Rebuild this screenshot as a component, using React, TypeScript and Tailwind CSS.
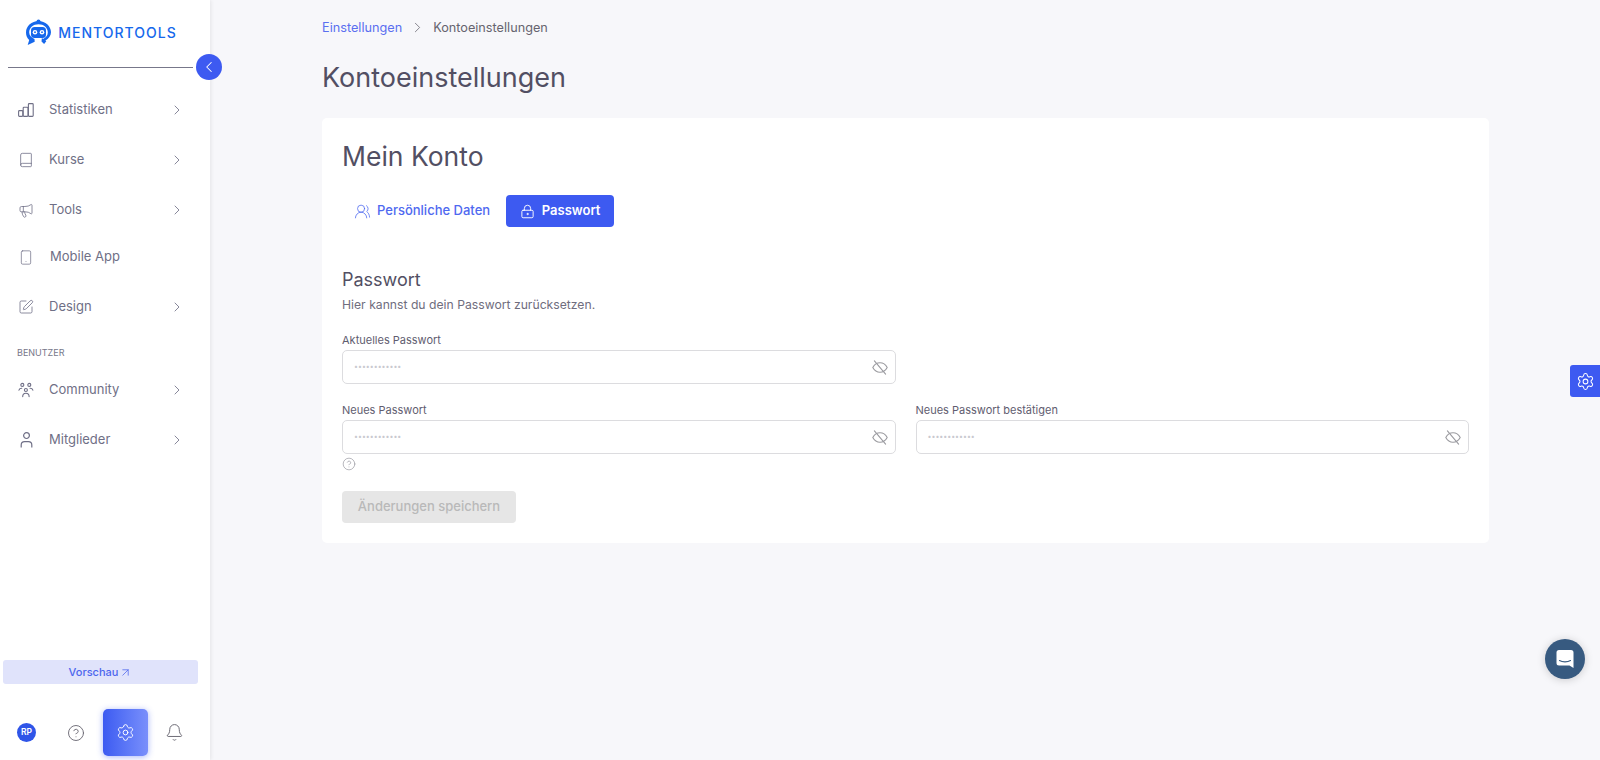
import React from "react";
import { Book, ChevronLeft, ChevronRight, CircleHelp, Bell, Settings, Megaphone, Smartphone, SquarePen, UsersRound, LockKeyhole, ArrowUpRight } from "lucide-react";

const Bars = () => (
  <svg width="16" height="14" viewBox="0 0 16 14" fill="none" stroke="currentColor" strokeWidth="1.1">
    <rect x="0.6" y="7.6" width="4.2" height="5.8" rx="0.8" />
    <rect x="5.2" y="4.2" width="4.8" height="9.2" rx="0.8" />
    <rect x="10.4" y="0.6" width="4.8" height="12.8" rx="0.8" />
  </svg>
);
const Community = () => (
  <svg width="17" height="16" viewBox="0 0 17 16" fill="none" stroke="currentColor" strokeWidth="1.2" strokeLinecap="round">
    <circle cx="4.6" cy="2.6" r="1.6" />
    <circle cx="12" cy="2.6" r="1.6" />
    <circle cx="8.4" cy="8" r="1.6" />
    <path d="M1 8.2c.4-1.4 1.6-2 3-2" />
    <path d="M15.8 8.2c-.4-1.4-1.6-2-3-2" />
    <path d="M5 15c0-2.4 1.4-3.6 3.4-3.6s3.4 1.2 3.4 3.6" />
  </svg>
);
const Person = () => (
  <svg width="13" height="16" viewBox="0 0 13 16" fill="none" stroke="currentColor" strokeWidth="1.2">
    <circle cx="6.5" cy="3.6" r="2.9" />
    <path d="M1.2 15.5v-2.4c0-2 1.6-3.4 3.4-3.4h3.8c1.8 0 3.4 1.4 3.4 3.4v2.4" />
  </svg>
);
const EyeSlash = () => (
  <svg width="16" height="15" viewBox="0 0 16 15" fill="none" stroke="#9a9a9f" strokeWidth="1.1" strokeLinecap="round">
    <path d="M0.8 7.5C2.600 4.200 5 2.800 8 2.800s5.400 1.400 7.200 4.700C13.400 10.800 11 12.200 8 12.200S2.600 10.800.8 7.500Z" />
    <path d="M2.400 0.800l11.200 13.400" />
  </svg>
);
const Logo = () => (
  <svg width="27" height="27" viewBox="0 0 27 27">
    <path fill="#1668ec" d="M13.500 2C6.700 2 1 7 1 13.400c0 3 1.200 5.600 3.200 7.500L2.700 26l7-3.300-.2-2.700C6.300 18.600 4.200 16.200 4.200 13.400 4.200 8.600 8.300 5.200 13.500 5.200s9.300 3.400 9.300 8.200c0 2.800-1.800 5.100-4.800 6.500l-1.100-1.100-.4 3.800 2.600 2.400 2.200-2.700-.9-.8c3.200-1.900 5.600-4.600 5.600-8.200C26 7 20.300 2 13.500 2Z" />
    <circle cx="13.500" cy="2.400" r="2" fill="#1668ec" />
    <rect x="6" y="8" width="15" height="11" rx="3.500" fill="#1668ec" />
    <circle cx="10" cy="13.200" r="2.300" fill="#fff" />
    <circle cx="17" cy="13.200" r="2.300" fill="#fff" />
    <circle cx="10" cy="13.200" r="0.900" fill="#1668ec" />
    <circle cx="17" cy="13.200" r="0.900" fill="#1668ec" />
  </svg>
);

function NavItem({ icon, label, arrow = true, gap = "w-[31px]" }: { icon: React.ReactNode; label: string; arrow?: boolean; gap?: string }) {
  return (
    <div className="flex h-[24px] items-center pl-[18px] pr-[25px] text-[13px] text-[#6f6f86]">
      <div className={`${gap} flex shrink-0 items-center`}>
        <div className="flex w-[16px] justify-center">{icon}</div>
      </div>
      <span className="flex-1">{label}</span>
      {arrow && <ChevronRight size={16} strokeWidth={1.250} />}
    </div>
  );
}

function Field({ label, className = "" }: { label: string; className?: string }) {
  return (
    <div className={className}>
      <div className="mb-[2px] text-[11px] leading-[15px] text-[#5f5d70]">{label}</div>
      <div className="flex h-[34px] items-center justify-between rounded-[5px] border border-[#dcdcdf] bg-white pl-[11px] pr-[7px]">
        <span className="text-[7px] text-[#c9c9cf]">••••••••••••</span>
        <EyeSlash />
      </div>
    </div>
  );
}

export default function App() {
  return (
    <div className="relative flex h-[760px] w-[1600px] overflow-hidden bg-[#f7f7fa] font-['Inter','Noto_Sans',sans-serif]">
      <aside className="relative flex h-full w-[210px] shrink-0 flex-col bg-white shadow-[1px_0_4px_rgba(0,0,0,0.08)]">
        <div className="ml-[8px] mr-[17px] flex h-[68px] items-start justify-center gap-[6px] border-b border-[#77778a] pl-[1px] pt-[19px]">
          <Logo />
          <span className="mt-[5px] text-[14px] font-medium leading-[17px] tracking-[1px] text-[#1668ec]">MENTORTOOLS</span>
        </div>
        <nav className="mt-[30px] flex flex-col">
          <NavItem icon={<Bars />} label="Statistiken" />
          <div className="h-[26px]" />
          <NavItem icon={<Book size={18} strokeWidth={1.200} />} label="Kurse" />
          <div className="h-[26px]" />
          <NavItem icon={<Megaphone size={19} strokeWidth={1.200} />} label="Tools" />
          <div className="h-[23px]" />
          <NavItem icon={<Smartphone size={21} strokeWidth={1.100} />} label="Mobile App" arrow={false} gap="w-[32px]" />
          <div className="h-[26px]" />
          <NavItem icon={<SquarePen size={18} strokeWidth={1.200} />} label="Design" />
          <div className="mb-[19px] mt-[28px] pl-[17px] text-[9px] leading-[12px] text-[#77778a]">BENUTZER</div>
          <NavItem icon={<Community />} label="Community" />
          <div className="h-[26px]" />
          <NavItem icon={<Person />} label="Mitglieder" />
        </nav>
        <div className="mt-auto px-[3px]">
          <div className="flex h-[24px] w-[195px] items-center justify-center gap-[1px] rounded-[3px] bg-[#e0e3fb] text-[11px] font-medium text-[#4d66ee]">
            Vorschau <ArrowUpRight size={13} strokeWidth={1.400} />
          </div>
        </div>
        <div className="mb-[4px] mt-[25px] flex h-[47px] items-center">
          <div className="ml-[17px] flex h-[19px] w-[19px] items-center justify-center rounded-full bg-[#2f55e8] text-[8.500px] font-semibold text-white">RP</div>
          <CircleHelp className="ml-[31px] text-[#66646f]" size={18} strokeWidth={1.200} />
          <div className="ml-[18px] flex h-[47px] w-[45px] items-center justify-center rounded-[5px] bg-gradient-to-r from-[#3d5af1] to-[#7a8ffb] text-white shadow-[0_1px_6px_rgba(61,90,241,0.45)]">
            <Settings size={19} strokeWidth={1.200} />
          </div>
          <Bell className="ml-[17px] text-[#66646f]" size={19} strokeWidth={1.200} />
        </div>
      </aside>

      <button className="absolute left-[196px] top-[54px] flex h-[26px] w-[26px] items-center justify-center rounded-full bg-[#3d5af1] text-white">
        <ChevronLeft size={18} strokeWidth={1.400} />
      </button>

      <main className="flex-1 pl-[112px] pr-[111px]">
        <div className="mt-[19px] flex h-[17px] items-center text-[12.700px] leading-[17px] text-[#66646f]">
          <span className="text-[#5b6ff0]">Einstellungen</span>
          <ChevronRight className="mx-[7px]" size={17} strokeWidth={1.100} />
          <span>Kontoeinstellungen</span>
        </div>
        <h1 className="mt-[24px] text-[27px] font-normal leading-[36px] text-[#524f63]">Kontoeinstellungen</h1>
        <section className="mt-[22px] h-[425px] rounded-[5px] bg-white px-[20px] pt-[20px]">
          <h2 className="text-[26.500px] leading-[36px] text-[#524f63]">Mein Konto</h2>
          <div className="mt-[21px] flex h-[32px] items-center gap-[16px]">
            <div className="flex h-[32px] items-center gap-[6px] pl-[12px] text-[13px] font-medium text-[#4f69f0]">
              <UsersRound size={17} strokeWidth={1.100} />
              Persönliche Daten
            </div>
            <div className="flex h-[32px] w-[108px] items-center justify-center gap-[7px] rounded-[4px] bg-[#3d5af1] text-[13px] font-semibold text-white">
              <LockKeyhole size={15} strokeWidth={1.500} />
              Passwort
            </div>
          </div>
          <h3 className="mt-[41px] text-[18px] leading-[24px] text-[#524f63]">Passwort</h3>
          <p className="mt-[4px] text-[12.200px] leading-[18px] text-[#6f6d7e]">Hier kannst du dein Passwort zurücksetzen.</p>
          <div className="mt-[19px] grid grid-cols-2 gap-x-[20px] gap-y-[19px]">
            <Field label="Aktuelles Passwort" />
            <div />
            <Field label="Neues Passwort" />
            <Field label="Neues Passwort bestätigen" />
          </div>
          <CircleHelp className="mt-[3px] text-[#9a9aa2]" size={14} strokeWidth={1.200} />
          <div className="mt-[20px] flex h-[32px] w-[174px] items-center justify-center rounded-[4px] bg-[#e6e6e6] text-[13px] font-medium text-[#b9b9b9]">Änderungen speichern</div>
        </section>
      </main>

      <div className="absolute right-0 top-[365px] flex h-[32px] w-[30px] items-center justify-center rounded-l-[3px] bg-[#3d5af1] text-white">
        <Settings size={19} strokeWidth={1.300} />
      </div>
      <div className="absolute left-[1545px] top-[639px] flex h-[40px] w-[40px] items-center justify-center rounded-full bg-[#375a80] shadow-[0_1px_8px_rgba(0,0,0,0.18)]">
        <svg width="18" height="20" viewBox="0 0 18 20">
          <path fill="#fff" d="M3 1h12a2.500 2.500 0 0 1 2.500 2.500V19l-4-2.500H3A2.500 2.500 0 0 1 .5 14V3.500A2.500 2.500 0 0 1 3 1Z" />
          <path d="M3.500 11.500c3 1.800 8 1.800 11 0" fill="none" stroke="#375a80" strokeWidth="1.100" strokeLinecap="round" />
        </svg>
      </div>
    </div>
  );
}
